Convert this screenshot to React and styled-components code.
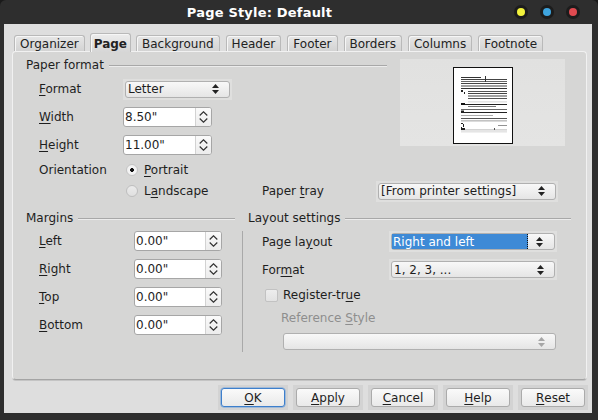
import React from "react";
import styled, { createGlobalStyle } from "styled-components";

const GlobalStyle = createGlobalStyle`
  html, body {
    margin: 0;
    padding: 0;
    background: #1a1a1a;
  }
  body {
    font-family: "DejaVu Sans", "Liberation Sans", sans-serif;
    font-size: 12px;
    color: #1e1e1e;
  }
`;

const Window = styled.div`
  width: 598px;
  height: 420px;
  box-sizing: border-box;
  background: #2e2e2e;
  border-radius: 6px 6px 0 0;
  padding: 0 6px 7px 4px;
  display: flex;
  flex-direction: column;
`;

const TitleBar = styled.div`
  height: 24px;
  margin: 0 -6px 0 -4px;
  display: flex;
  align-items: center;
`;

const Title = styled.div`
  flex: 1;
  text-align: center;
  padding-left: 5px;
  color: #ffffff;
  font-weight: bold;
  font-size: 13px;
  letter-spacing: 0.2px;
`;

const Controls = styled.div`
  display: flex;
  gap: 12px;
  padding-right: 18px;
`;

const Dot = styled.span`
  width: 14px;
  height: 14px;
  border-radius: 50%;
  background: #1c1c1c;
  display: flex;
  align-items: center;
  justify-content: center;
  &::after {
    content: "";
    width: 8px;
    height: 8px;
    border-radius: 50%;
    background: ${(p) => p.$color};
  }
`;

const Client = styled.div`
  flex: 1;
  background: #dedede;
  display: flex;
  flex-direction: column;
`;

const TabBar = styled.div`
  display: flex;
  align-items: flex-end;
  gap: 6px;
  padding: 9px 0 0 10px;
  margin-bottom: -1px;
  position: relative;
  z-index: 1;
`;

const Tab = styled.div`
  box-sizing: border-box;
  height: ${(p) => (p.$active ? 19 : 16)}px;
  margin-bottom: ${(p) => (p.$active ? 0 : 1)}px;
  padding: ${(p) => (p.$active ? "1px 3px 0" : "0 5px")};
  margin-left: ${(p) => (p.$active ? -1 : 0)}px;
  margin-right: ${(p) => (p.$active ? -1 : 0)}px;
  border: 1px solid #b9b9b9;
  border-bottom: none;
  border-radius: 3px 3px 0 0;
  background: ${(p) =>
    p.$active
      ? "linear-gradient(#ededed, #d6d6d6)"
      : "linear-gradient(#e6e6e6, #d3d3d3)"};
  box-shadow: inset 1px 1px 0 #f6f6f6;
  font-weight: ${(p) => (p.$active ? "bold" : "normal")};
  color: #222;
  display: flex;
  align-items: center;
  line-height: 1;
`;

const Panel = styled.div`
  flex: 1;
  margin: 0 5px 0 8px;
  box-sizing: border-box;
  border: 1px solid #f1f1f1;
  border-bottom-color: #a4a4a4;
  border-radius: 4px;
  box-shadow: 0 1px 0 #c4c4c4;
  background: #d6d6d5;
  padding: 6px 0 0 13px;
  display: flex;
  flex-direction: column;
`;

const GroupHeading = styled.div`
  height: 14px;
  display: flex;
  align-items: center;
  gap: 5px;
  padding-left: ${(p) => p.$indent || 0}px;
  white-space: nowrap;
  &::after {
    content: "";
    flex: 1;
    height: 1px;
    background: #a8a8a8;
    box-shadow: 0 1px 0 #ececec;
  }
`;

const PaperTop = styled.div`
  display: flex;
  align-items: flex-start;
`;

const PaperFields = styled.div`
  width: 361px;
  display: flex;
  flex-direction: column;
`;

const FieldList = styled.div`
  display: flex;
  flex-direction: column;
  padding-left: ${(p) => p.$indent}px;
  margin-top: ${(p) => p.$top || 0}px;
`;

const Row = styled.div`
  display: flex;
  align-items: center;
  height: ${(p) => p.$h || 28}px;
  margin-top: ${(p) => p.$mt || 0}px;
  padding-left: ${(p) => p.$pl || 0}px;
`;

const Label = styled.span`
  width: ${(p) => p.$w}px;
  flex-shrink: 0;
  color: ${(p) => (p.$disabled ? "#8e8e8e" : "inherit")};
  white-space: nowrap;
`;

const U = styled.span`
  text-decoration: underline;
  text-underline-offset: 2px;
`;

const Preview = styled.div`
  margin: 1px 0 0 13px;
  width: 165px;
  height: 87px;
  background: linear-gradient(#e1e1e0, #e4e4e3);
  display: flex;
  justify-content: center;
  padding-top: 8px;
  box-sizing: border-box;
`;

const PageSheet = styled.div`
  width: 60px;
  height: 77px;
  box-sizing: border-box;
  border: 1px solid #111;
  background: #ffffff;
`;

const SelectSlot = styled.div`
  width: ${(p) => p.$w}px;
  height: 21px;
  box-sizing: border-box;
  padding: 2px;
  background: ${(p) => (p.$plain ? "transparent" : "#dfdfde")};
  flex-shrink: 0;
`;

const Select = styled.div`
  height: 100%;
  box-sizing: border-box;
  border: 1px solid #b0b0b0;
  border-radius: 3px;
  background: linear-gradient(#f8f8f8, #e5e5e5);
  display: flex;
  align-items: stretch;
  color: ${(p) => (p.$disabled ? "#9a9a9a" : "#1e1e1e")};
`;

const SelectText = styled.span`
  flex: 1;
  display: flex;
  align-items: center;
  padding-left: ${(p) => (p.$highlight ? 1 : 2)}px;
  margin-right: 16px;
  white-space: nowrap;
  ${(p) =>
    p.$highlight &&
    `
    background: #3e8ad6;
    color: #ffffff;
    margin-right: 22px;
    border-right: 1px dotted #111;
  `}
`;

const ArrowBox = styled.span`
  width: 16px;
  margin-left: -16px;
  display: flex;
  align-items: center;
  justify-content: center;
  padding-right: 6px;
  ${(p) => p.$wide && "margin-left: -22px; width: 22px; padding-right: 4px;"}
`;

const SpinBox = styled.div`
  width: ${(p) => p.$w}px;
  height: 20px;
  display: flex;
  flex-shrink: 0;
  box-sizing: border-box;
  border: 1px solid #a6a6a6;
  border-radius: 3px;
  background: #ffffff;
  overflow: hidden;
`;

const SpinText = styled.span`
  flex: 1;
  display: flex;
  align-items: center;
  padding-left: 1px;
`;

const SpinButtons = styled.span`
  width: 15px;
  border-left: 1px solid #d2d2d2;
  background: linear-gradient(#fafafa, #ececec);
  display: flex;
  flex-direction: column;
  align-items: center;
  justify-content: center;
  gap: 2px;
`;

const RadioRow = styled.label`
  display: flex;
  align-items: center;
  gap: 6px;
  width: ${(p) => p.$w}px;
  padding-left: 3px;
  box-sizing: border-box;
`;

const RadioCircle = styled.span`
  width: 12px;
  height: 12px;
  border-radius: 50%;
  box-sizing: border-box;
  border: 1px solid ${(p) => (p.$checked ? "#c4c4c4" : "#bebebe")};
  background: ${(p) =>
    p.$checked
      ? "radial-gradient(circle, #111 0 1.6px, #f6f6f6 2.2px, #ececec)"
      : "linear-gradient(#ebebeb, #e0e0e0)"};
`;

const BottomGrid = styled.div`
  display: grid;
  grid-template-columns: 209px 329px;
  column-gap: 7px;
  margin-top: 10px;
`;

const Column = styled.div`
  display: flex;
  flex-direction: column;
`;

const ColumnBody = styled.div`
  margin-top: 6px;
  display: flex;
  flex-direction: column;
  padding-left: ${(p) => p.$indent}px;
  ${(p) => p.$divider && "border-left: 1px solid #a9a9a9;"}
`;

const Checkbox = styled.span`
  width: 13px;
  height: 13px;
  box-sizing: border-box;
  border: 1px solid #c2c2c2;
  border-radius: 2px;
  background: linear-gradient(#ededed, #e2e2e2);
  margin: 0 5px 0 3px;
`;

const ButtonBar = styled.div`
  display: flex;
  justify-content: flex-end;
  gap: 5px;
  padding: 5px 4px 3px 0;
`;

const ButtonSlot = styled.div`
  width: 70px;
  height: 25px;
  padding: 3px;
  box-sizing: border-box;
  background: #d3d3d3;
`;

const Button = styled.div`
  height: 100%;
  box-sizing: border-box;
  border: 1px solid ${(p) => (p.$default ? "#3d7fcc" : "#ababab")};
  box-shadow: ${(p) => (p.$default ? "0 0 0 0.5px #6ea2de" : "none")};
  border-radius: 3px;
  background: linear-gradient(#fafafa, #e9e9e9);
  display: flex;
  align-items: center;
  justify-content: center;
  color: #1e1e1e;
`;

const SelectArrows = ({ color = "#222" }) => (
  <svg width="7" height="10" viewBox="0 0 7 10">
    <path d="M3.5 0 L7 4 L0 4 Z" fill={color} />
    <path d="M0 6 L7 6 L3.5 10 Z" fill={color} />
  </svg>
);

const Chevron = ({ up }) => (
  <svg width="9" height="5" viewBox="0 0 9 5">
    <path
      d={up ? "M0.7 4.5 L4.5 0.8 L8.3 4.5" : "M0.7 0.5 L4.5 4.2 L8.3 0.5"}
      fill="none"
      stroke="#333"
      strokeWidth="1.2"
    />
  </svg>
);

const Dropdown = ({ width, children, highlight, disabled, plain }) => (
  <SelectSlot $w={width} $plain={plain}>
    <Select $disabled={disabled}>
      <SelectText $highlight={highlight}>{children}</SelectText>
      <ArrowBox $wide={highlight}>
        <SelectArrows color={disabled ? "#a6a6a6" : "#222"} />
      </ArrowBox>
    </Select>
  </SelectSlot>
);

const Spin = ({ width, value }) => (
  <SpinBox $w={width}>
    <SpinText>{value}</SpinText>
    <SpinButtons>
      <Chevron up />
      <Chevron />
    </SpinButtons>
  </SpinBox>
);

// tiny page thumbnail, a few grey text lines
const previewLines = [
  [7, 9, 20, 1, "#333"],
  [7, 11, 46, 1, "#444"],
  [7, 13, 46, 1, "#666"],
  [7, 15, 46, 1, "#444"],
  [7, 17.5, 46, 1, "#444"],
  [7, 20, 46, 1, "#333"],
  [14, 23, 39, 1, "#555"],
  [14, 25, 39, 1, "#444"],
  [14, 27.5, 39, 1, "#444"],
  [14, 30, 39, 1, "#555"],
  [14, 33.5, 39, 0.8, "#ccc"],
  [7, 36, 46, 1, "#222"],
  [14, 38, 28, 1, "#777"],
  [7, 41, 46, 0.8, "#444"],
  [7, 44, 46, 1, "#222"],
  [7, 47, 32, 0.8, "#999"],
  [7, 50, 46, 1, "#555"],
  [7, 52.5, 46, 0.8, "#888"],
  [44, 57, 9, 0.8, "#777"],
  [7, 61.5, 46, 0.8, "#aaa"],
  [7, 63.5, 46, 0.8, "#ccc"],
];

const PagePreview = () => (
  <svg width="58" height="75" viewBox="0 0 58 75">
    {previewLines.map(([x, y, w, h, c], i) => (
      <rect key={i} x={x} y={y} width={w} height={h} fill={c} />
    ))}
    <rect x="7" y="22" width="2" height="2" fill="#222" />
    <rect x="10" y="24" width="1" height="2" fill="#222" />
    <rect x="7" y="35" width="4" height="2" fill="#111" />
    <rect x="7" y="42.5" width="3" height="2" fill="#222" />
    <rect x="7" y="55" width="2" height="1" fill="#222" />
    <rect x="9" y="56" width="1" height="3" fill="#222" />
    <rect x="7" y="59" width="1" height="3" fill="#222" />
    <rect x="8" y="60" width="3" height="2" fill="#222" />
    <rect x="40" y="60" width="1" height="2" fill="#555" />
    <rect x="31" y="8" width="1" height="6" fill="#333" />
  </svg>
);

const tabs = [
  "Organizer",
  "Page",
  "Background",
  "Header",
  "Footer",
  "Borders",
  "Columns",
  "Footnote",
];

const App = () => (
  <>
    <GlobalStyle />
    <Window>
      <TitleBar>
        <Title>Page Style: Default</Title>
        <Controls>
          <Dot $color="#f2f23c" />
          <Dot $color="#3ea4de" />
          <Dot $color="#e04a50" />
        </Controls>
      </TitleBar>
      <Client>
        <TabBar>
          {tabs.map((t) => (
            <Tab key={t} $active={t === "Page"}>
              {t}
            </Tab>
          ))}
        </TabBar>
        <Panel>
          <PaperTop>
            <PaperFields>
              <GroupHeading>Paper format</GroupHeading>
              <FieldList $indent={13} $top={3}>
                <Row>
                  <Label $w={84}>
                    <U>F</U>ormat
                  </Label>
                  <Dropdown width={109}>Letter</Dropdown>
                </Row>
                <Row>
                  <Label $w={84}>
                    <U>W</U>idth
                  </Label>
                  <Spin width={89} value={'8.50"'} />
                </Row>
                <Row>
                  <Label $w={84}>
                    <U>H</U>eight
                  </Label>
                  <Spin width={89} value={'11.00"'} />
                </Row>
                <Row $h={22}>
                  <Label $w={84}>Orientation</Label>
                  <RadioRow $w={139}>
                    <RadioCircle $checked />
                    <span>
                      <U>P</U>ortrait
                    </span>
                  </RadioRow>
                </Row>
              </FieldList>
            </PaperFields>
            <Preview>
              <PageSheet>
                <PagePreview />
              </PageSheet>
            </Preview>
          </PaperTop>
          <Row $h={20} $pl={97}>
            <RadioRow $w={139}>
              <RadioCircle />
              <span>
                L<U>a</U>ndscape
              </span>
            </RadioRow>
            <Label $w={114}>
              Paper <U>t</U>ray
            </Label>
            <Dropdown width={182}>[From printer settings]</Dropdown>
          </Row>
          <BottomGrid>
            <Column>
              <GroupHeading>Margins</GroupHeading>
              <ColumnBody $indent={13}>
                {[
                  ["L", "eft"],
                  ["R", "ight"],
                  ["T", "op"],
                  ["B", "ottom"],
                ].map(([m, rest], i) => (
                  <Row key={m} $h={20} $mt={i ? 8 : 0}>
                    <Label $w={95}>
                      <U>{m}</U>
                      {rest}
                    </Label>
                    <Spin width={88} value={'0.00"'} />
                  </Row>
                ))}
              </ColumnBody>
            </Column>
            <Column>
              <GroupHeading $indent={6}>Layout settings</GroupHeading>
              <ColumnBody $indent={19} $divider>
                <Row $h={21}>
                  <Label $w={127}>
                    Page la<U>y</U>out
                  </Label>
                  <Dropdown width={168} highlight>
                    Right and left
                  </Dropdown>
                </Row>
                <Row $h={21} $mt={7}>
                  <Label $w={127}>
                    For<U>m</U>at
                  </Label>
                  <Dropdown width={168}>1, 2, 3, ...</Dropdown>
                </Row>
                <Row $h={24} $mt={3}>
                  <Checkbox />
                  <span>
                    Register-tr<U>u</U>e
                  </span>
                </Row>
                <Row $h={22} $pl={19}>
                  <Label $w={200} $disabled>
                    Reference <U>S</U>tyle
                  </Label>
                </Row>
                <Row $h={21} $mt={2} $pl={19}>
                  <Dropdown width={277} disabled plain />
                </Row>
              </ColumnBody>
            </Column>
          </BottomGrid>
        </Panel>
        <ButtonBar>
          {[
            ["O", "K"],
            ["A", "pply"],
            ["C", "ancel"],
            ["H", "elp"],
            ["R", "eset"],
          ].map(([m, rest], i) => (
            <ButtonSlot key={m + rest}>
              <Button $default={i === 0}>
                <U>{m}</U>
                {rest}
              </Button>
            </ButtonSlot>
          ))}
        </ButtonBar>
      </Client>
    </Window>
  </>
);

export default App;
